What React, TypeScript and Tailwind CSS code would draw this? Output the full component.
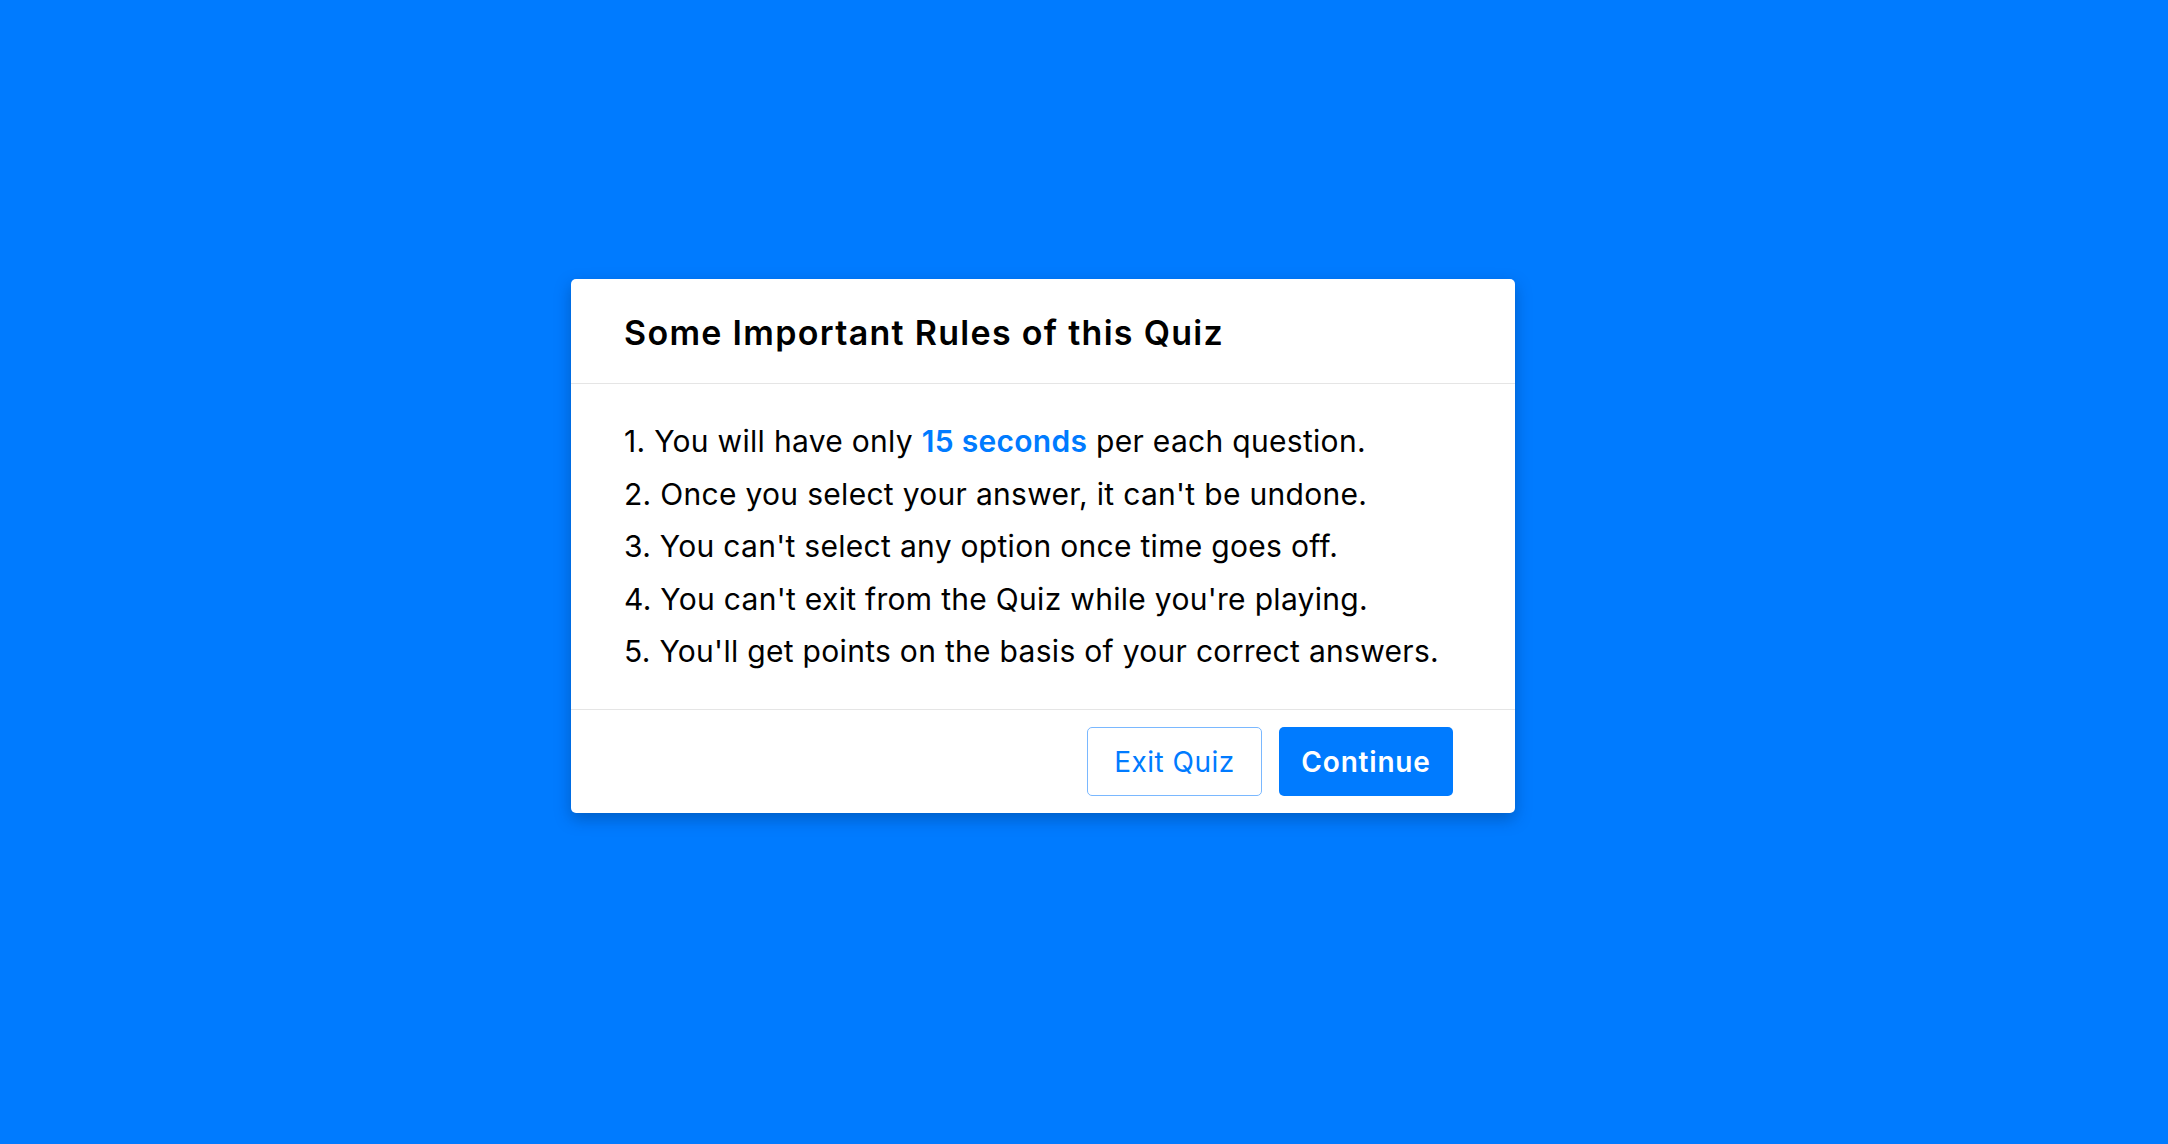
const rules = [
  "You can't select any option once time goes off.",
  "You can't exit from the Quiz while you're playing.",
  "You'll get points on the basis of your correct answers.",
];

export default function App() {
  return (
    <main className="min-h-screen w-full bg-[#007bff] pt-[279px] pl-[571px] font-['Inter',sans-serif] text-black">
      <div className="w-[944px] rounded-[5px] bg-white shadow-[0_6px_16px_rgba(0,40,90,0.35)]">
        <div className="flex h-[105px] items-center border-b border-[#e5e5e5] px-[53px] pt-[3px]">
          <h1 className="text-[34px] font-semibold tracking-[1.3px]">Some Important Rules of this Quiz</h1>
        </div>
        <div className="px-[53px] pt-[31px] pb-[31px] text-[30px] leading-[52.5px] tracking-[0.3px]">
          <div>
            1. You will have only <span className="font-semibold text-[#007bff]">15 seconds</span> per each question.
          </div>
          <div>2. Once you select your answer, it can't be undone.</div>
          {rules.map((r, i) => (
            <div key={i}>
              {i + 3}. {r}
            </div>
          ))}
        </div>
        <div className="flex h-[104px] items-center justify-end gap-[17px] border-t border-[#e5e5e5] pt-[1px] pr-[62px]">
          <button className="h-[69px] w-[175px] rounded-[5px] border border-[#7ab8ff] bg-white text-[28px] tracking-[0.5px] text-[#007bff]">
            Exit Quiz
          </button>
          <button className="h-[69px] w-[174px] rounded-[5px] bg-[#007bff] text-[28px] font-semibold tracking-[0.8px] text-white">
            Continue
          </button>
        </div>
      </div>
    </main>
  );
}
